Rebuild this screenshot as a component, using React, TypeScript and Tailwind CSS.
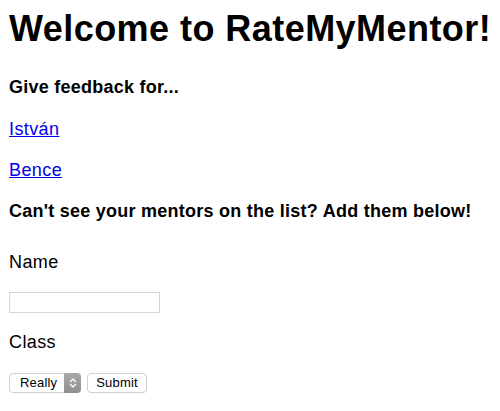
import React from "react";

export default function App() {
  return (
    <div
      className="flex flex-col items-start pl-[9px] text-black bg-white min-h-[411px]"
      style={{ fontFamily: '"Liberation Sans", Arial, Helvetica, sans-serif' }}
    >
      <h1 className="mt-[11px] text-[36px] leading-[36px] font-bold tracking-[0.45px] whitespace-nowrap">
        Welcome to RateMyMentor!
      </h1>
      <h3 className="mt-[29px] text-[18px] leading-[22px] font-bold tracking-[0.25px]">Give feedback for...</h3>
      <a href="#" className="mt-[20px] text-[18px] leading-[22px] tracking-[0.4px] text-[#0000ee] underline">
        István
      </a>
      <a href="#" className="mt-[19px] text-[18px] leading-[22px] tracking-[0.4px] text-[#0000ee] underline">
        Bence
      </a>
      <h3 className="mt-[19px] text-[18px] leading-[22px] font-bold tracking-[0.25px]">
        Can't see your mentors on the list? Add them below!
      </h3>
      <label className="mt-[29px] text-[18px] leading-[22px] tracking-[0.4px]">Name</label>
      <input
        type="text"
        className="block mt-[19px] w-[151px] h-[21px] border border-[#d6d6d6] bg-white outline-none"
      />
      <label className="mt-[18px] text-[18px] leading-[22px] tracking-[0.4px]">Class</label>
      <div className="mt-[20px] flex items-center gap-[6px]">
        <div className="relative w-[72px] h-[20px]">
          <select className="block appearance-none w-[72px] h-[20px] rounded-[4px] border border-[#cfcfcf] bg-white pl-[10px] text-[13px] leading-[18px] tracking-[0.2px] text-black outline-none">
            <option>Really</option>
          </select>
          <div className="pointer-events-none absolute right-0 top-0 w-[17px] h-[20px] rounded-r-[4px] bg-gradient-to-b from-[#a9a9a9] to-[#8f8f8f] flex items-center justify-center">
            <svg width="8" height="12" viewBox="0 0 8 12" fill="none" stroke="white" strokeWidth="1.3" strokeLinecap="round" strokeLinejoin="round">
              <path d="M1.5 4.5 L4 2 L6.5 4.5" />
              <path d="M1.5 7.5 L4 10 L6.5 7.5" />
            </svg>
          </div>
        </div>
        <button className="block w-[60px] h-[20px] rounded-[4px] border border-[#cfcfcf] bg-white text-[13px] leading-[18px] tracking-[0.2px] text-black">
          Submit
        </button>
      </div>
    </div>
  );
}
